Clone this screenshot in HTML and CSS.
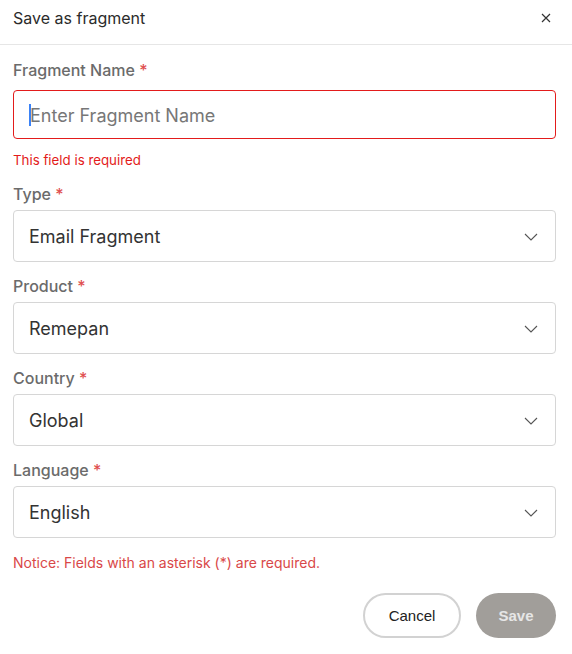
FILE: index.html
```html
<!DOCTYPE html>
<html>
<head>
<meta charset="utf-8">
<link rel="stylesheet" href="styles.css">
</head>
<body>
<div class="dialog">
  <div class="header">
    <span class="title">Save as fragment</span>
    <span class="close">
      <svg width="10" height="10" viewBox="0 0 10 10"><path d="M1 1 L9 9 M9 1 L1 9" stroke="#333" stroke-width="1.2" fill="none"/></svg>
    </span>
  </div>
  <div class="body">
    <div class="field">
      <label class="label first">Fragment Name <span class="req">*</span></label>
      <div class="input error"><span class="caret"></span><span class="placeholder">Enter Fragment Name</span></div>
      <div class="err-msg">This field is required</div>
    </div>
    <div class="field">
      <label class="label">Type <span class="req">*</span></label>
      <div class="input select"><span class="value">Email Fragment</span><svg class="chev" width="14" height="8" viewBox="0 0 14 8"><path d="M1 1 L7 7 L13 1" stroke="#555" stroke-width="1.1" fill="none"/></svg></div>
    </div>
    <div class="field">
      <label class="label">Product <span class="req">*</span></label>
      <div class="input select"><span class="value">Remepan</span><svg class="chev" width="14" height="8" viewBox="0 0 14 8"><path d="M1 1 L7 7 L13 1" stroke="#555" stroke-width="1.1" fill="none"/></svg></div>
    </div>
    <div class="field">
      <label class="label">Country <span class="req">*</span></label>
      <div class="input select"><span class="value">Global</span><svg class="chev" width="14" height="8" viewBox="0 0 14 8"><path d="M1 1 L7 7 L13 1" stroke="#555" stroke-width="1.1" fill="none"/></svg></div>
    </div>
    <div class="field">
      <label class="label">Language <span class="req">*</span></label>
      <div class="input select"><span class="value">English</span><svg class="chev" width="14" height="8" viewBox="0 0 14 8"><path d="M1 1 L7 7 L13 1" stroke="#555" stroke-width="1.1" fill="none"/></svg></div>
    </div>
    <div class="notice">Notice: Fields with an asterisk (*) are required.</div>
    <div class="actions">
      <button class="btn cancel">Cancel</button>
      <button class="btn save">Save</button>
    </div>
  </div>
</div>
</body>
</html>
```
FILE: styles.css
```css
* { box-sizing: border-box; }
html, body { margin: 0; padding: 0; background: #fff; }
body { font-family: "Inter", "Noto Sans", sans-serif; color: #333; }
.dialog { width: 572px; }
.header {
  height: 45px;
  display: flex;
  align-items: flex-start;
  justify-content: space-between;
  padding: 8px 21px 0 13px;
  border-bottom: 1px solid #e6e6e6;
}
.title { font-size: 16px; line-height: 20px; color: #2b2b2b; }
.close { display: flex; align-items: center; height: 20px; }
.body { padding: 16px 16px 0 13px; }
.field { display: flex; flex-direction: column; }
.label { font-size: 16px; color: #6b6b6b; font-weight: 500; line-height: 17px; margin-bottom: 7px; }
.label.first { line-height: 18px; margin-bottom: 11px; }
.req { color: #e05050; }
.input {
  height: 50px;
  border: 1px solid #d6d6d6;
  border-radius: 4px;
  display: flex;
  align-items: center;
  padding: 1px 15px 0 15px;
  font-size: 18px;
}
.input.error { border-color: #e31b1b; height: 49px; }
.caret { width: 2px; height: 22px; background: #3b82f6; margin-right: -1px; }
.placeholder { color: #777; }
.select { height: 52px; justify-content: space-between; margin-bottom: 16px; }
.value { color: #333; }
.chev { margin-right: 2px; }
.err-msg { font-size: 13.3px; color: #e31b1b; margin: 13px 0 18px; line-height: 16px; }
.notice { font-size: 14px; color: #d94848; margin-top: 1px; line-height: 16px; }
.actions { display: flex; justify-content: flex-end; gap: 15px; margin-top: 22px; }
.btn {
  font-family: "Liberation Sans", Arial, sans-serif;
  font-size: 15px;
  height: 45px;
  border-radius: 23px;
}
.cancel { width: 98px; background: #fff; border: 2px solid #d2d2d2; color: #222; }
.save { width: 80px; background: #a19e9a; border: none; color: #e6e6e6; font-weight: bold; }
```
